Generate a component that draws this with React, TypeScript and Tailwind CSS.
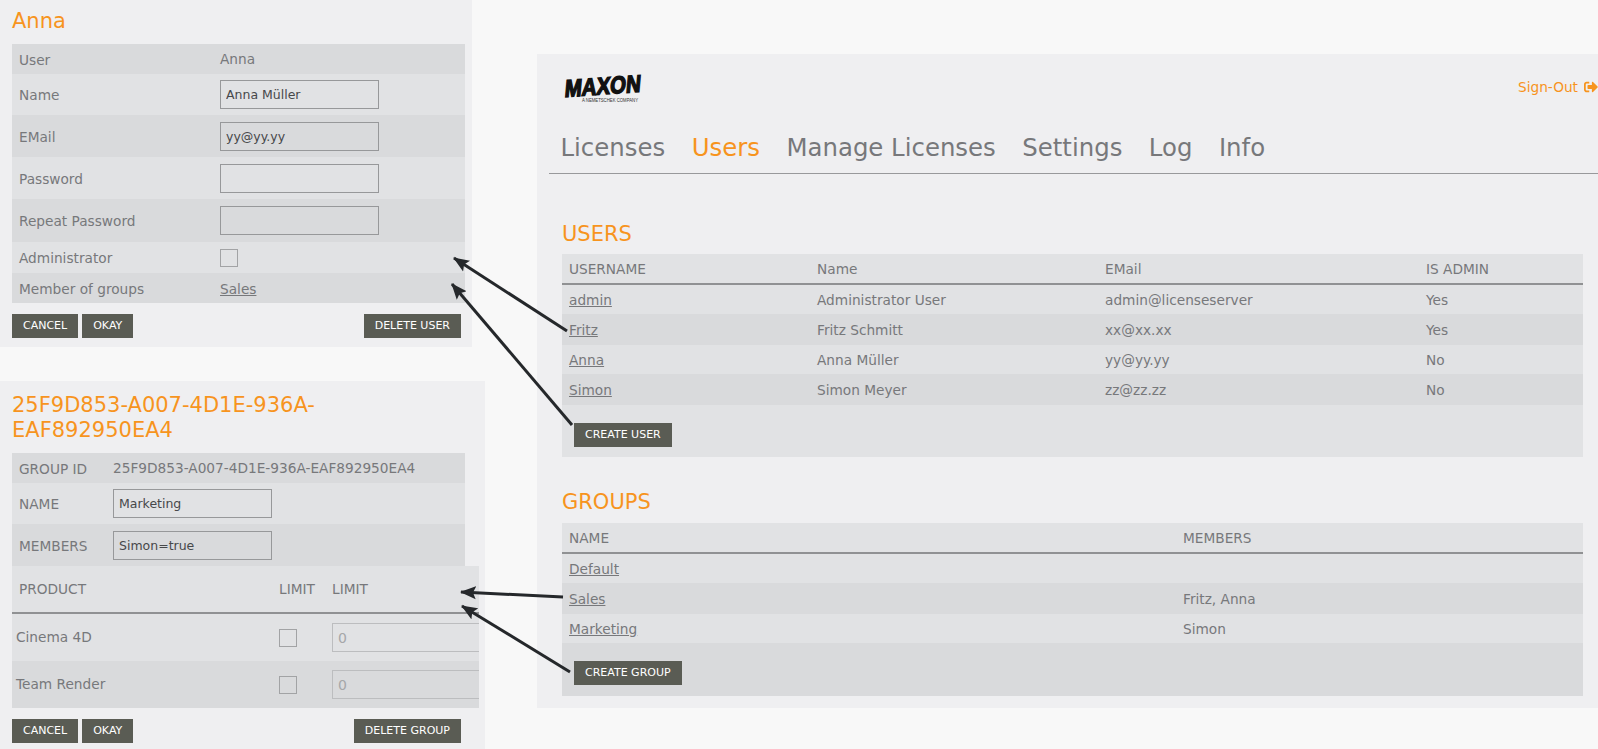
import { FaSignOutAlt } from 'react-icons/fa';

const NAV = ['Licenses', 'Users', 'Manage Licenses', 'Settings', 'Log', 'Info'];

const USERS = [
  ['admin', 'Administrator User', 'admin@licenseserver', 'Yes'],
  ['Fritz', 'Fritz Schmitt', 'xx@xx.xx', 'Yes'],
  ['Anna', 'Anna Müller', 'yy@yy.yy', 'No'],
  ['Simon', 'Simon Meyer', 'zz@zz.zz', 'No'],
];

const GROUPS = [
  ['Default', ''],
  ['Sales', 'Fritz, Anna'],
  ['Marketing', 'Simon'],
];

const LIGHT = 'bg-[#e1e2e4]';
const DARK = 'bg-[#d9dadc]';

function Btn({ children }: { children: string }) {
  return (
    <button className="h-[24px] px-[11px] bg-[#5a5c54] text-white text-[11px] leading-[24px] whitespace-nowrap">
      {children}
    </button>
  );
}

function Field({ value }: { value?: string }) {
  return (
    <input
      defaultValue={value}
      className="w-[159px] h-[29px] px-[5px] border border-[#97989a] bg-transparent text-[12.5px] text-[#47484a] outline-none"
    />
  );
}

function Box() {
  return <input type="checkbox" className="appearance-none block w-[18px] h-[18px] border border-[#a2a3a5] bg-transparent" />;
}

function FormRow({ label, h, bg, left, children }: { label: string; h: string; bg: string; left: string; children: React.ReactNode }) {
  return (
    <div className={`flex items-center ${h} ${bg}`}>
      <div className={`${left} pl-[7px] pt-[2px] shrink-0`}>{label}</div>
      {children}
    </div>
  );
}

function AnnaPanel() {
  return (
    <section className="w-[472px] h-[347px] bg-[#efeff1] pl-[12px] pr-[7px]">
      <h2 className="pt-[7px] h-[44px] text-[21px] leading-[28px] text-[#f7941e]">Anna</h2>
      <FormRow label="User" h="h-[30px]" bg={DARK} left="w-[208px]">Anna</FormRow>
      <FormRow label="Name" h="h-[41px]" bg={LIGHT} left="w-[208px]"><Field value="Anna Müller" /></FormRow>
      <FormRow label="EMail" h="h-[42px]" bg={DARK} left="w-[208px]"><Field value="yy@yy.yy" /></FormRow>
      <FormRow label="Password" h="h-[42px]" bg={LIGHT} left="w-[208px]"><Field /></FormRow>
      <FormRow label="Repeat Password" h="h-[43px]" bg={DARK} left="w-[208px]"><Field /></FormRow>
      <FormRow label="Administrator" h="h-[31px]" bg={LIGHT} left="w-[208px]"><Box /></FormRow>
      <FormRow label="Member of groups" h="h-[30px]" bg={DARK} left="w-[208px]"><span className="underline pt-[2px]">Sales</span></FormRow>
      <div className="flex gap-[4px] pt-[11px] pr-[4px]">
        <Btn>CANCEL</Btn>
        <Btn>OKAY</Btn>
        <div className="ml-auto"><Btn>DELETE USER</Btn></div>
      </div>
    </section>
  );
}

function GroupPanel() {
  return (
    <section className="w-[485px] h-[368px] mt-[34px] bg-[#efeff1] pl-[12px]">
      <h2 className="pt-[12px] h-[72px] text-[21px] leading-[25px] text-[#f7941e] w-[400px]">25F9D853-A007-4D1E-936A-EAF892950EA4</h2>
      <div className="w-[453px]">
        <FormRow label="GROUP ID" h="h-[30px]" bg={DARK} left="w-[101px]">25F9D853-A007-4D1E-936A-EAF892950EA4</FormRow>
        <FormRow label="NAME" h="h-[41px]" bg={LIGHT} left="w-[101px]"><Field value="Marketing" /></FormRow>
        <FormRow label="MEMBERS" h="h-[42px]" bg={DARK} left="w-[101px]"><Field value="Simon=true" /></FormRow>
      </div>
      <div className="w-[467px] overflow-hidden">
        <div className={`flex items-center h-[48px] border-b-2 border-[#909193] ${LIGHT}`}>
          <div className="w-[267px] pl-[7px] shrink-0">PRODUCT</div>
          <div className="w-[53px] shrink-0">LIMIT</div>
          <div>LIMIT</div>
        </div>
        {['Cinema 4D', 'Team Render'].map((p, i) => (
          <div key={p} className={`flex items-center h-[47px] ${i ? DARK : LIGHT}`}>
            <div className="w-[267px] pl-[4px] shrink-0">{p}</div>
            <div className="w-[53px] shrink-0"><Box /></div>
            <input disabled defaultValue="0" className="w-[159px] shrink-0 h-[29px] px-[5px] border border-[#bcbdbf] bg-transparent text-[14px] text-[#a6a7a9]" />
          </div>
        ))}
      </div>
      <div className="flex gap-[4px] pt-[11px] w-[449px]">
        <Btn>CANCEL</Btn>
        <Btn>OKAY</Btn>
        <div className="ml-auto"><Btn>DELETE GROUP</Btn></div>
      </div>
    </section>
  );
}

function Logo() {
  return (
    <svg width="80" height="30" viewBox="0 0 80 30" className="overflow-visible" aria-label="Maxon">
      <g transform="rotate(-4 2 23)">
        <text x="2" y="23" transform="translate(4 0) skewX(-9)" fontFamily="'Liberation Sans', sans-serif" fontWeight="700" fontSize="24" textLength="76" lengthAdjust="spacingAndGlyphs" stroke="#111" strokeWidth="1.5" fill="#111">
          MAXON
        </text>
      </g>
      <text x="20" y="28" fontFamily="'Liberation Sans', sans-serif" fontSize="4.5" textLength="56" lengthAdjust="spacingAndGlyphs" fill="#333">
        A NEMETSCHEK COMPANY
      </text>
    </svg>
  );
}

function DataTable({ cols, head, rows, action, pad }: { cols: string; head: string[]; rows: string[][]; action: string; pad: string }) {
  return (
    <div className="mr-[15px]">
      <div className={`grid ${cols} items-center h-[31px] border-b-2 border-[#909193] ${LIGHT}`}>
        {head.map((h) => <div key={h} className="pl-[7px] pt-[1px]">{h}</div>)}
      </div>
      {rows.map((r, i) => (
        <div key={r[0]} className={`grid ${cols} items-center ${i % 2 ? 'h-[31px]' : 'h-[29px]'} ${i % 2 ? DARK : LIGHT}`}>
          {r.map((c, j) => (
            <div key={j} className={`pl-[7px] pt-[1px] ${j === 0 ? 'underline' : ''}`}>{c}</div>
          ))}
        </div>
      ))}
      <div className={`${pad} pl-[12px] ${rows.length % 2 ? DARK : LIGHT}`}>
        <Btn>{action}</Btn>
      </div>
    </div>
  );
}

function Main() {
  return (
    <main className="w-[1061px] h-[654px] mt-[54px] ml-[52px] bg-[#efeff1] pl-[12px] overflow-hidden">
      <header className="h-[120px] border-b border-[#98999b]">
        <div className="flex justify-between h-[76px] pt-[20px] pl-[13px]">
          <Logo />
          <a className="flex items-center gap-[6px] h-[24px] mt-[1px] text-[#f7941e] whitespace-nowrap">
            Sign-Out <FaSignOutAlt className="w-[14px] h-[14px]" />
          </a>
        </div>
        <nav className="flex gap-[26.5px] pl-[11.5px] text-[24.4px] leading-[36px]">
          {NAV.map((n) => (
            <a key={n} className={n === 'Users' ? 'text-[#f7941e]' : 'text-[#77787b]'}>{n}</a>
          ))}
        </nav>
      </header>
      <div className="pl-[13px]">
        <h2 className="h-[80px] pt-[45px] text-[21px] leading-[30px] text-[#f7941e]">USERS</h2>
        <DataTable
          cols="grid-cols-[248px_288px_321px_1fr]"
          head={['USERNAME', 'Name', 'EMail', 'IS ADMIN']}
          rows={USERS}
          action="CREATE USER"
          pad="pt-[18px] pb-[10px]"
        />
        <h2 className="h-[66px] pt-[30px] text-[21px] leading-[30px] text-[#f7941e]">GROUPS</h2>
        <DataTable
          cols="grid-cols-[614px_1fr]"
          head={['NAME', 'MEMBERS']}
          rows={GROUPS}
          action="CREATE GROUP"
          pad="pt-[18px] pb-[11px]"
        />
      </div>
    </main>
  );
}

function Arrows() {
  const lines = [
    [567, 331, 454, 258],
    [572, 425, 452, 284],
    [563, 597, 461, 592],
    [570, 672, 462, 606],
  ];
  return (
    <svg className="absolute inset-0 pointer-events-none" width="1598" height="749">
      <defs>
        <marker id="head" markerUnits="userSpaceOnUse" markerWidth="17" markerHeight="14" refX="15" refY="7" orient="auto">
          <path d="M0 0.5 L16 7 L0 13.5 L3 7 Z" fill="#25282b" />
        </marker>
      </defs>
      {lines.map(([x1, y1, x2, y2]) => (
        <line key={x1 + '-' + y1} x1={x1} y1={y1} x2={x2} y2={y2} stroke="#25282b" strokeWidth="3" markerEnd="url(#head)" />
      ))}
    </svg>
  );
}

export default function App() {
  return (
    <div className="relative flex w-[1598px] h-[749px] overflow-hidden bg-[#f8f8f8] text-[13.7px] text-[#77787b] font-['DejaVu_Sans','Liberation_Sans',sans-serif]">
      <div>
        <AnnaPanel />
        <GroupPanel />
      </div>
      <Main />
      <Arrows />
    </div>
  );
}
